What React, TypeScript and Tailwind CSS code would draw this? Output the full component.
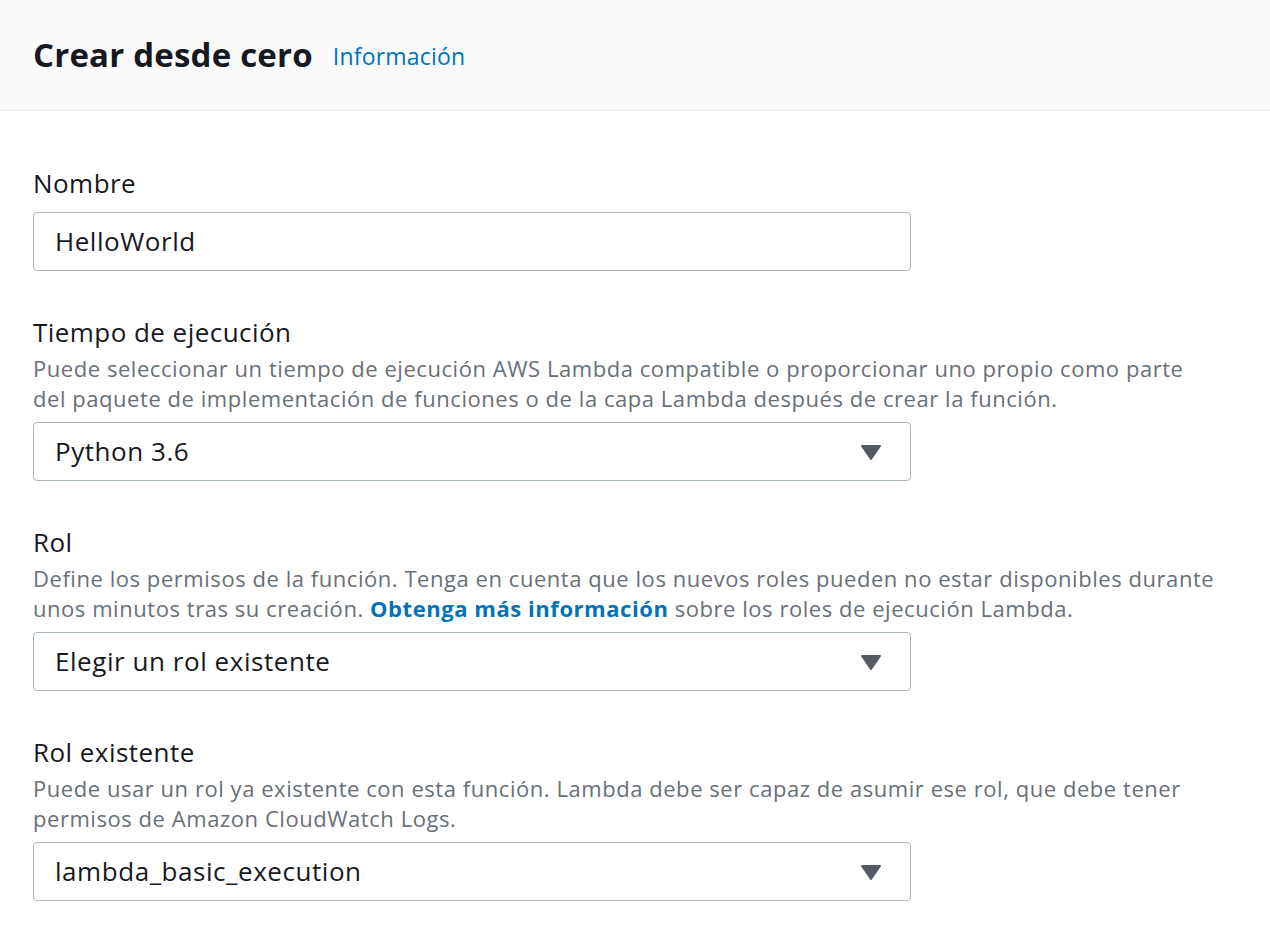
import React from 'react';

const font = { fontFamily: '"Open Sans", "Noto Sans", Arial, sans-serif' };

const Caret = () => (
  <svg width="22" height="16" viewBox="0 0 22 16" className="shrink-0">
    <path d="M2 2 H20 L11 15 Z" fill="#545b64" stroke="#545b64" strokeWidth="2" strokeLinejoin="round" />
  </svg>
);

const Field = ({ label, desc, children }: { label: string; desc?: React.ReactNode; children: React.ReactNode }) => (
  <div className="flex flex-col">
    <label className="text-[26px] leading-[30px] tracking-[0.45px] text-[#16191f]">{label}</label>
    {desc ? (
      <p className="mt-[6px] mb-[9px] text-[22px] leading-[30px] tracking-[0.55px] text-[#687078]">{desc}</p>
    ) : (
      <div className="h-[14px]" />
    )}
    {children}
  </div>
);

const Box = ({ value, select }: { value: string; select?: boolean }) => (
  <div className="flex h-[59px] w-[878px] items-center justify-between rounded-[4px] border border-[#aab7b8] bg-white pl-[21px] pr-[28px]">
    <span className="text-[26px] tracking-[0.55px] text-[#16191f]">{value}</span>
    {select && <Caret />}
  </div>
);

export default function App() {
  return (
    <div className="min-h-[950px] w-[1270px] bg-white" style={font}>
      <div className="flex h-[111px] items-center gap-[20px] border-b border-[#eaeded] bg-[#fafafa] px-[33px] pb-[1px]">
        <h2 className="text-[33px] font-bold tracking-[0.2px] text-[#16191f]">Crear desde cero</h2>
        <a className="mt-[4px] text-[23px] tracking-[0.2px] text-[#0073bb]">Información</a>
      </div>

      <div className="flex flex-col gap-[46px] px-[33px] pt-[57px]">
        <Field label="Nombre">
          <Box value="HelloWorld" />
        </Field>

        <Field
          label="Tiempo de ejecución"
          desc={
            <>
              Puede seleccionar un tiempo de ejecución AWS Lambda compatible o proporcionar uno propio como parte
              <br />
              del paquete de implementación de funciones o de la capa Lambda después de crear la función.
            </>
          }
        >
          <Box value="Python 3.6" select />
        </Field>

        <Field
          label="Rol"
          desc={
            <>
              Define los permisos de la función. Tenga en cuenta que los nuevos roles pueden no estar disponibles durante
              <br />
              unos minutos tras su creación. <a className="font-bold text-[#0073bb]">Obtenga más información</a> sobre los roles de ejecución Lambda.
            </>
          }
        >
          <Box value="Elegir un rol existente" select />
        </Field>

        <Field
          label="Rol existente"
          desc={
            <>
              Puede usar un rol ya existente con esta función. Lambda debe ser capaz de asumir ese rol, que debe tener
              <br />
              permisos de Amazon CloudWatch Logs.
            </>
          }
        >
          <Box value="lambda_basic_execution" select />
        </Field>
      </div>
    </div>
  );
}
